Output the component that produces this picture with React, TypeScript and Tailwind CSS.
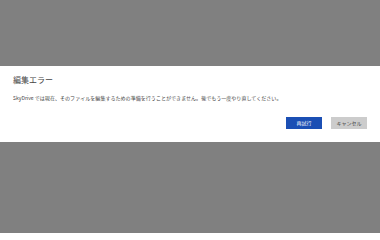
export default function App() {
  return (
    <div
      className="flex h-[233px] w-[380px] flex-col bg-[#808080]"
      style={{ fontFamily: '"Noto Sans CJK JP", "Liberation Sans", sans-serif' }}
    >
      <div className="h-[66px] shrink-0" />
      <div className="flex h-[76px] shrink-0 flex-col bg-white px-[13px] pt-[9px]">
        <h1 className="text-[8px] leading-[10px] text-[#444]">編集エラー</h1>
        <p className="mt-[9px] whitespace-nowrap text-[5.05px] leading-[7px] text-[#444]">
          SkyDrive では現在、そのファイルを編集するための準備を行うことができません。後でもう一度やり直してください。
        </p>
        <div className="mt-[16px] flex justify-end gap-[9px]">
          <button className="flex h-[12px] w-[36px] items-center justify-center bg-[#1b4fb4] text-[5px] text-white">
            再試行
          </button>
          <button className="flex h-[12px] w-[36px] items-center justify-center bg-[#cccccc] text-[5px] text-[#444]">
            キャンセル
          </button>
        </div>
      </div>
      <div className="flex-1" />
    </div>
  );
}
